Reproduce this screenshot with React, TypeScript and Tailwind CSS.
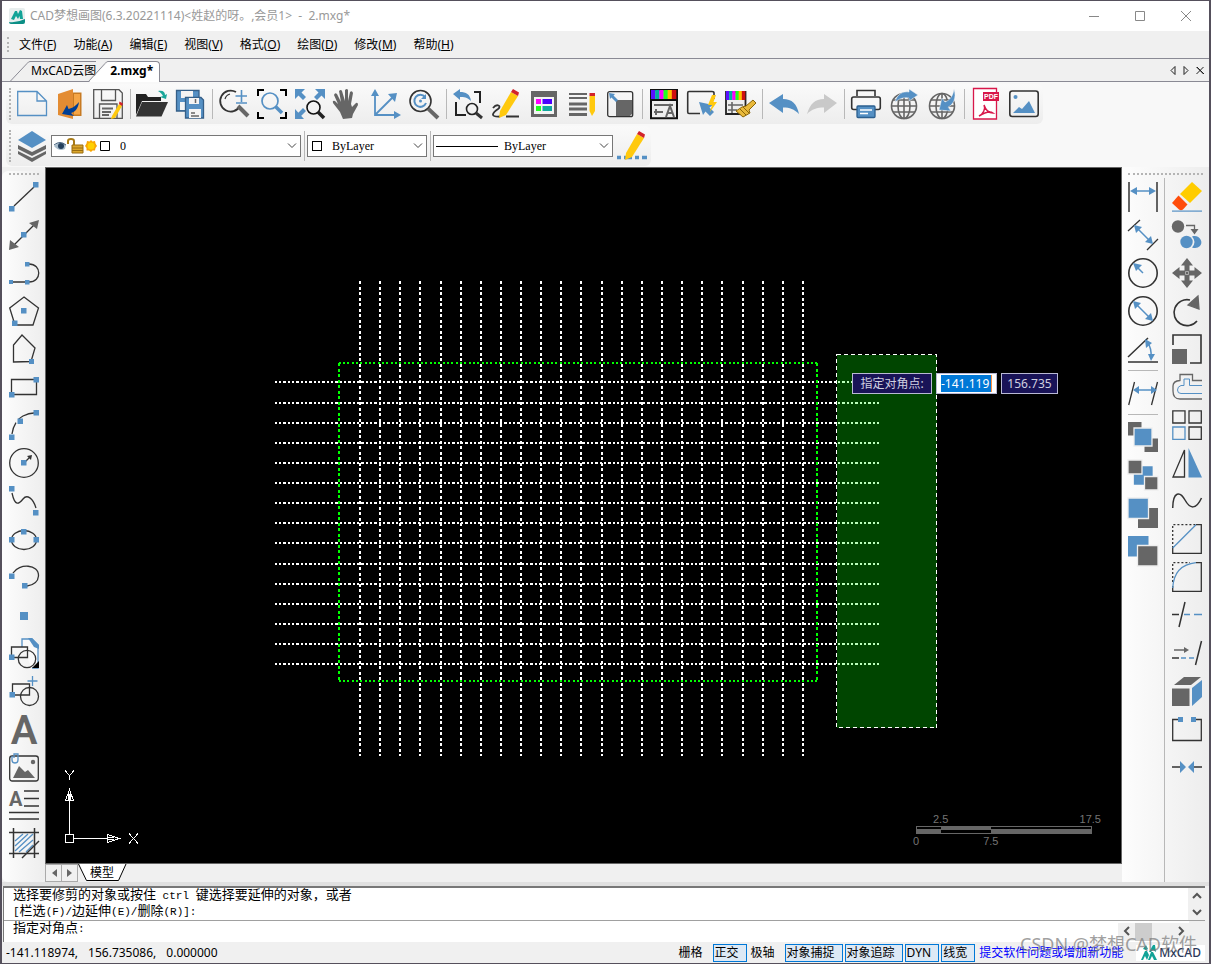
import React from 'react';

const BLUE = '#5590c4';
const GRAY = '#666666';
const DARK = '#333333';

interface IconProps {
  children: React.ReactNode;
}

const Icon: React.FC<IconProps> = ({ children }) => (
  <svg width="30" height="30" viewBox="0 0 30 30" fill="none" stroke={DARK} strokeWidth="1.3" className="shrink-0 overflow-visible" aria-hidden="true">
    {children}
  </svg>
);

// Blue grip handle used on most of the drawing icons
const Sq: React.FC<{ x: number; y: number; s?: number }> = ({ x, y, s = 5.5 }) => (
  <rect x={x} y={y} width={s} height={s} fill={BLUE} stroke="none" />
);

const Lens: React.FC<{ x: number; y: number; r: number; color?: string; handle?: string; w?: number }> = ({ x, y, r, color = DARK, handle = GRAY, w = 4 }) => (
  <>
    <circle cx={x} cy={y} r={r} stroke={color} strokeWidth="1.6" />
    <path d={`M${x + r * 0.75} ${y + r * 0.75}L29 29`} stroke={handle} strokeWidth={w} />
  </>
);

const Pencil: React.FC = () => (
  <g stroke="none">
    <path d="M20 3L27 7L15 26L8 29L9 22Z" fill="#ffc90e" />
    <path d="M22 0L28 3.500L27 7L20 3Z" fill="#d2232a" />
  </g>
);

const Globe: React.FC = () => (
  <g stroke={GRAY} strokeWidth="1.6">
    <circle cx="15" cy="17" r="12.500" />
    <ellipse cx="15" cy="17" rx="6" ry="12.500" />
    <path d="M15 4V30M2.500 17H27.500M4 11H26M4 23H26" />
  </g>
);

const Swatch: React.FC<{ w: number; y: number }> = ({ w, y }) => (
  <g stroke="none">
    {['#5a10ff', '#00b0a0', '#ff00ff', '#20ff20', '#ffc000', '#d01010'].map((c, i) => (
      <rect key={c} x={3 + (i * w) / 6} y={y} width={w / 6 + 0.3} height="9" fill={c} />
    ))}
  </g>
);

interface Tool {
  label: string;
  icon: React.ReactNode;
}

const fileTools: (Tool | null)[] = [
  { label: '新建', icon: <path d="M.7 2.500H20L29.500 12V26.500H.7ZM20 2.500V12H29.500" stroke={BLUE} /> },
  {
    label: '退出',
    icon: (
      <g stroke="none">
        <path d="M14 3.500H26.500V27H14Z" fill="#c77a22" />
        <path d="M19 5H25V25.500H19Z" fill="#f5a545" />
        <path d="M3 5L18 0V30L3 26Z" fill="#e38c33" />
        <path d="M24 13C23 20 20 23 16 24L19 27L7 25L12 16L13.500 20C18 19 20 17 24 13Z" fill="#003f95" />
      </g>
    ),
  },
  {
    label: '保存',
    icon: (
      <>
        <path d="M.7.7H26L29.300 4V29.300H.7Z" stroke="#555" />
        <path d="M8.500.7V11.500H22.500V.7M6.500 29V15H24V29" stroke="#555" />
        <path d="M9 19.500H20M9 23H18M9 26H16" stroke={GRAY} strokeWidth="1.8" />
        <path d="M26 15L29 17L22 29L18 30L19 27Z" fill="#ffc90e" stroke="none" />
        <path d="M26.500 12.500L30 14.500L29 17L26 15Z" fill="#d2232a" stroke="none" />
      </>
    ),
  },
  null,
  {
    label: '打开',
    icon: (
      <g stroke="none" transform="translate(-2 0)">
        <path d="M1 5H11L13 8H26V12H7L1 26Z" fill="#222" />
        <path d="M7 13H33L26.500 27.500H1Z" fill={DARK} />
        <path d="M23 2C28 1 30 3 30 6L32 5L31 10L25 8L28 7C27 5 26 4 23 2Z" fill="#1aa79a" />
      </g>
    ),
  },
  {
    label: '全部保存',
    icon: (
      <>
        <path d="M1.500 1.500H24V22H1.500Z" fill={BLUE} stroke="#355f88" />
        <path d="M6 2H18V9H6ZM5 13H15V21H5Z" fill="#f4f4f4" stroke="none" />
        <path d="M10.500 8.500H26L28.500 11V29H10.500Z" fill={BLUE} stroke="#355f88" />
        <path d="M14 9H24V15H14ZM14 20H26V29H14Z" fill="#f4f4f4" stroke="none" />
        <path d="M16 24H20M16 27H24M20.500 10V14" stroke={GRAY} strokeWidth="1.5" />
      </>
    ),
  },
  null,
  {
    label: '实时缩放',
    icon: (
      <>
        <path d="M17 3A10.500 10.500 0 1 0 21 17" strokeWidth="1.8" />
        <path d="M6 10A7 7 0 0 1 11 5" strokeWidth="1.2" />
        <path d="M19 17L29 27" stroke={GRAY} strokeWidth="4" />
        <path d="M22.500 1V13M16.500 7H28M17 14H28" stroke={BLUE} strokeWidth="1.6" />
      </>
    ),
  },
  {
    label: '窗口缩放',
    icon: (
      <>
        <path d="M1 7V1H7M23 1H29V7M29 23V29H23M7 29H1V23" stroke="#000" strokeWidth="2" />
        <circle cx="13" cy="12" r="8" stroke={BLUE} strokeWidth="1.700" />
        <path d="M18.500 17.500L25 24" stroke={BLUE} strokeWidth="3.500" />
      </>
    ),
  },
  {
    label: '范围缩放',
    icon: (
      <>
        <g fill={BLUE} stroke="none">
          <path d="M0 0H10L0 10ZM30 0V10L20 0ZM0 30V20L9 30Z" />
          <path d="M2 5L5 2L11 8L8 11ZM25 2L28 5L22 11L19 8ZM2 25L5 28L11 22L8 19Z" />
        </g>
        <circle cx="18.500" cy="18.500" r="6.500" stroke="#111" strokeWidth="1.600" />
        <path d="M23 23L29 29" stroke="#222" strokeWidth="3.500" />
      </>
    ),
  },
  {
    label: '平移',
    icon: (
      <path
        d="M11 30L8 23L1 14Q0 11 3 12L6 15L2 6Q3 3 5 5L9 13L7 2Q9 0 10 2L13 12L13 1Q15 -1 16 1V12L18 3Q20 1 21 4L19 15L20 18L24 14Q26 13 26 16L21 25L20 29Z"
        fill={GRAY}
        stroke="none"
        transform="translate(-1 0)"
      />
    ),
  },
  {
    label: '坐标系',
    icon: (
      <g stroke={BLUE} strokeWidth="1.800">
        <path d="M4 5V26H26M4 26L23 7" />
        <path d="M0 7L4 0L8 7ZM23 22L30 26L23 30ZM17 5L26 4L24 13Z" fill={BLUE} stroke="none" />
      </g>
    ),
  },
  {
    label: '缩放上一个',
    icon: (
      <>
        <Lens x={11.5} y={12} r={10.5} />
        <path d="M16 8A6 6 0 1 0 17 14" stroke={BLUE} strokeWidth="2" />
        <path d="M17 5V10H12Z" fill={BLUE} stroke="none" />
        <circle cx="11.500" cy="12" r="1.500" fill={BLUE} stroke="none" />
      </>
    ),
  },
  null,
  {
    label: '返回视图',
    icon: (
      <>
        <path d="M3 13V26H13M21 3H27V14" stroke="#222" strokeWidth="2" />
        <path d="M0 5L7 0V3C13 3 17 5 18 12C14 8 11 8 7 8V11Z" fill={BLUE} stroke="none" />
        <circle cx="19" cy="20" r="5.500" stroke="#222" strokeWidth="1.600" />
        <path d="M23 24L29 29" stroke="#333" strokeWidth="3" />
      </>
    ),
  },
  {
    label: '草图',
    icon: (
      <>
        <path d="M2 19C6 14 11 17 7 20C0 25 0 28 9 27.500M15 27.500H28" strokeWidth="1.800" />
        <Pencil />
      </>
    ),
  },
  {
    label: '特性',
    icon: (
      <g stroke="none">
        <path d="M2 2H28V28H2Z" fill={GRAY} />
        <path d="M5 8H25V25H5Z" fill="#f4f4f4" />
        <path d="M7 10H12V15H7Z" fill="#ff00ff" />
        <path d="M13.500 10H23V15H13.500Z" fill="#4a00ff" />
        <path d="M7 17H12V22H7Z" fill="#20ff20" />
        <path d="M13.500 17H23V22H13.500Z" fill="#10a8a0" />
      </g>
    ),
  },
  {
    label: '线型',
    icon: (
      <>
        <path d="M2 5H20M2 9H20" stroke={GRAY} strokeWidth="1.800" />
        <path d="M2 15H20M2 20H20M2 25.500H20" stroke={GRAY} strokeWidth="3" />
        <path d="M22.500 7H28V22L25 27L22.500 22Z" fill="#ffc90e" stroke="none" />
        <path d="M22.500 4H28V7H22.500Z" fill="#d2232a" stroke="none" />
      </>
    ),
  },
  {
    label: '比例',
    icon: (
      <>
        <rect x="2.700" y="2.700" width="25" height="25" rx="2" />
        <path d="M11 11H27V25L25 27H11Z" fill={GRAY} stroke="none" />
        <path d="M4 4L10 5L8.500 6.500L13 11L11 13L6.500 8.500L5 10Z" fill={BLUE} stroke="none" />
      </>
    ),
  },
  null,
  {
    label: '图层特性',
    icon: (
      <g transform="translate(-1 0)">
        <path d="M3 1H29V29.300H3Z" fill="#eee" stroke="#111" strokeWidth="2" />
        <Swatch w={25} y={1} />
        <path d="M2 11H29" stroke="#111" strokeWidth="2" />
        <path d="M6 16H25M6 23H15" stroke={GRAY} strokeWidth="2" />
        <path d="M8 20V26M18 28L22 17L26 28M19 24H25" stroke={GRAY} strokeWidth="2" />
      </g>
    ),
  },
  {
    label: '快速选择',
    icon: (
      <>
        <path d="M13 24.500H2Q.7 24.500.7 23V4Q.7 2.500 2 2.500H25Q27 2.500 27 4V10" strokeWidth="1.600" />
        <path d="M12 13L26 16L22.500 18.500L27 23L23 27L18.500 22.500L16 26Z" fill={BLUE} stroke="none" />
        <path d="M25 6L21 16H25L23 23L30 13H26.500L29 6Z" fill="#ffc90e" stroke="none" />
      </>
    ),
  },
  {
    label: '特性匹配',
    icon: (
      <g transform="translate(-2 0)">
        <path d="M3 3H22.500V25H3Z" fill="#eee" stroke="#222" strokeWidth="1.800" />
        <Swatch w={19} y={2} />
        <path d="M5 16H20M5 21H14M9 13V24" stroke={GRAY} strokeWidth="1.600" />
        <path d="M30 11L33 14L26 21L27 24L20 28L13 22L19 18L23 17Z" fill="#e9b93a" stroke="#8a6508" strokeWidth="1" />
        <path d="M17 20L23 26M20 18L26 24" stroke="#8a6508" strokeWidth="1" />
      </g>
    ),
  },
  null,
  { label: '撤销', icon: <path d="M0 14L14 5V10C23 10 28 15 30 25C25 20 21 18.500 14 18.500V24Z" fill={BLUE} stroke="none" /> },
  { label: '重做', icon: <path d="M30 14L17 5V10C8 10 3 15 0 25C5 20 10 18.500 17 18.500V24Z" fill="#c9c9c9" stroke="none" /> },
  null,
  {
    label: '打印',
    icon: (
      <>
        <path d="M6 7V1.500H24V7" strokeWidth="1.600" />
        <rect x=".7" y="8" width="28.600" height="12.500" rx="2" fill="#f7f7f7" strokeWidth="1.600" />
        <rect x="6" y="17" width="18" height="11.500" rx="1" fill={BLUE} stroke="#2b5f8f" />
        <path d="M9 21H21M9 24.500H17" stroke="#fff" strokeWidth="1.500" />
      </>
    ),
  },
  {
    label: '网络发布',
    icon: (
      <>
        <Globe />
        <path d="M6 13C8 5 14 2 20 3V0L29 6L20 12V9C14 8 10 10 6 13Z" fill={BLUE} stroke="#f7f7f7" strokeWidth=".5" />
      </>
    ),
  },
  {
    label: '网络下载',
    icon: (
      <>
        <Globe />
        <path d="M27 0C30 9 26 16 21 18L24 22L12 21L15 9L18 13C23 11 26 7 27 0Z" fill={BLUE} stroke="#f7f7f7" strokeWidth=".5" />
      </>
    ),
  },
  null,
  {
    label: '输出PDF',
    icon: (
      <>
        <path d="M2.500 -.5H25.500V30H2.500Z" fill="#fff" stroke="#d8174a" />
        <path d="M12 3H28V12H12Z" fill="#d8174a" stroke="none" />
        <text x="13" y="10" fill="#fff" stroke="none" className="font-['Liberation_Sans'] text-[7px] font-bold">PDF</text>
        <path d="M13 16C15 22 18 24 22 24C19 22 13 24 8 27C12 25 15 20 13 16Z" stroke="#d8174a" strokeWidth="1.500" />
      </>
    ),
  },
  {
    label: '输出图片',
    icon: (
      <>
        <rect x=".8" y="2" width="28.400" height="25.500" rx="2.500" strokeWidth="1.600" />
        <circle cx="6.500" cy="8" r="2" fill={BLUE} stroke="none" />
        <path d="M4 24L10 18L13 20L20 12L26 24Z" fill={BLUE} stroke="none" />
      </>
    ),
  },
];

const drawTools: Tool[] = [
  { label: '直线', icon: <><path d="M5 24L25 5" /><Sq x={24} y={0} /><Sq x={0} y={24} /></> },
  { label: '构造线', icon: <><path d="M4 26L26 4" /><path d="M30 0L20 3L28 9ZM0 30L10 27L1 20Z" fill={GRAY} stroke="none" /><Sq x={12} y={12} /></> },
  { label: '多段线', icon: <><path d="M4 24H18M20 6C33 6 33 24 20 24" /><Sq x={16} y={4} s={4.5} /><Sq x={0} y={22} s={4} /><Sq x={16} y={22} s={4.5} /></> },
  { label: '多边形', icon: <><path d="M15 1L29.500 12L24 29H6L.7 12Z" /><Sq x={12} y={12} /><Sq x={3} y={24.5} /></> },
  { label: '任意多边形', icon: <><path d="M13 1L26 14L22 27.500L4.500 28V11Z" /><Sq x={20} y={25} s={5} /></> },
  { label: '矩形', icon: <><path d="M2.500 7.500H27.500V22.500H2.500Z" /><Sq x={24.5} y={5} /><Sq x={0} y={20} /></> },
  { label: '圆弧', icon: <><path d="M3 24Q5 11 14 6Q20 3 25 3" strokeDasharray="12 4 20" /><Sq x={24.5} y={0} /><Sq x={8.5} y={8.5} /><Sq x={0} y={24.5} /></> },
  { label: '圆', icon: <><circle cx="15" cy="15" r="14.300" /><path d="M15 15L21 9" /><path d="M23 7L18 8L22 12Z" fill={DARK} stroke="none" /><Sq x={12} y={12} /></> },
  { label: '样条曲线', icon: <><path d="M3 7C6 21 10 18 14 13S24 12 27 22" /><Sq x={0} y={0} /><Sq x={24} y={24} /></> },
  { label: '椭圆', icon: <><ellipse cx="15" cy="16" rx="12.500" ry="9.500" /><Sq x={12} y={5} /><Sq x={0} y={13} /><Sq x={24.5} y={13} /></> },
  { label: '椭圆弧', icon: <><path d="M4 11C10 1 30 2 29.500 14C29 20 25 23 18 24" /><Sq x={0} y={11.5} /><Sq x={13} y={21} /></> },
  { label: '点', icon: <Sq x={11} y={12} s={8} /> },
  {
    label: '插入块',
    icon: (
      <>
        <path d="M13 9V1H23L29 7V30H23" fill="#fafafa" stroke={BLUE} />
        <path d="M19 0H23L30 7V11L25 9Z" fill={BLUE} stroke="none" />
        <path d="M2.500 9H18.500V19.500H2.500Z" />
        <circle cx="18" cy="21" r="8.700" />
        <path d="M30 23V30H23Z" fill="#000" stroke="none" />
        <Sq x={0} y={16.5} />
      </>
    ),
  },
  {
    label: '创建块',
    icon: (
      <>
        <path d="M3.500 8H20.500V19H3.500Z" />
        <circle cx="20.500" cy="20.500" r="9" />
        <path d="M23.500 0V10M18.500 5H28.500" stroke={BLUE} />
        <Sq x={0.5} y={16} />
      </>
    ),
  },
  { label: '单行文字', icon: <text x="15" y="29.500" textAnchor="middle" fill={GRAY} stroke="none" className="font-[Roboto] text-[40px] font-semibold">A</text> },
  {
    label: '图像',
    icon: (
      <>
        <rect x=".7" y="4" width="28.600" height="25" rx="2.500" />
        <path d="M4 26L10 14L16 20L19 18L26 26Z" fill={GRAY} stroke="none" />
        <circle cx="24" cy="10" r="2.200" fill={GRAY} stroke="none" />
        <path d="M3 4V8Q3 11 6 11T9 8V2H5V6" stroke={BLUE} />
      </>
    ),
  },
  {
    label: '多行文字',
    icon: (
      <>
        <text x="0" y="16" fill={GRAY} stroke="none" className="font-[Roboto] text-[20px] font-bold">A</text>
        <path d="M15 1H30M15 8.500H30M15 16H30M0 22.500H30M0 29H30" strokeWidth="1.500" />
      </>
    ),
  },
  {
    label: '图案填充',
    icon: (
      <>
        <path d="M6 13L14 6M6 18L19 6M6 23L24 6M10 24L24 12M17 24L24 17" stroke={BLUE} />
        <path d="M0 4.500H30M0 25.500H30M4.500 0V30M25.500 0V30" strokeWidth="1.500" />
        <path d="M30 13L13 30" strokeWidth="1.500" />
      </>
    ),
  },
];

const dimTools: (Tool | null)[] = [
  { label: '线性标注', icon: <><path d="M1 0V30M29 0V30" strokeWidth="1.500" /><path d="M6 9H24" stroke={BLUE} strokeWidth="1.500" /><path d="M2 9L9 5V13ZM28 9L21 5V13Z" fill={BLUE} stroke="none" /></> },
  { label: '对齐标注', icon: <><path d="M0 11L12 0M19 30L30 19" /><path d="M8 7L23 22" stroke={BLUE} strokeWidth="1.500" /><path d="M6 5L14 7L8 13ZM25 24L17 22L23 16Z" fill={BLUE} stroke="none" /></> },
  { label: '半径标注', icon: <><circle cx="15" cy="15" r="14.200" strokeWidth="1.600" /><path d="M8 8L15 15" stroke={BLUE} strokeWidth="1.500" /><path d="M5 5L14 7L8 13Z" fill={BLUE} stroke="none" /></> },
  { label: '直径标注', icon: <><circle cx="15" cy="15" r="14.200" strokeWidth="1.600" /><path d="M8 8L22 22" stroke={BLUE} strokeWidth="1.500" /><path d="M5 5L13 7L7 13ZM25 25L17 23L23 17Z" fill={BLUE} stroke="none" /></> },
  { label: '角度标注', icon: <><path d="M0 23L20 4M0 28H30" strokeWidth="1.500" /><path d="M19 8Q24 14 23 24" stroke={BLUE} strokeWidth="1.500" /><path d="M17 5L24 9L18 14ZM23 27L20 20L27 20Z" fill={BLUE} stroke="none" /></> },
  null,
  { label: '标注间距', icon: <><path d="M6.500 4L.7 27M29.500 4L23.500 27" /><path d="M9 12H25" stroke={BLUE} strokeWidth="1.500" /><path d="M5 12L11 8V16ZM29 12L23 8V16Z" fill={BLUE} stroke="none" /></> },
  null,
  { label: '置于上方', icon: <g stroke="none"><path d="M0 0H13.500V13.500H0ZM16.500 16.500H30V30H16.500Z" fill={GRAY} /><path d="M6 6H24V24H6Z" fill={BLUE} stroke="#eee" /></g> },
  { label: '置于下方', icon: <g stroke="#eee"><path d="M13 7H24V17H13ZM6.500 13H17V24H6.500Z" fill={BLUE} stroke={BLUE} /><path d="M0 0H14V14H0ZM16.500 16.500H30V30H16.500Z" fill={GRAY} /></g> },
  { label: '前置', icon: <g stroke="none"><path d="M10 10H30V30H10Z" fill={GRAY} /><path d="M0 0H20.500V20.500H0Z" fill={BLUE} stroke="#eee" /></g> },
  { label: '后置', icon: <g stroke="none"><path d="M0 0H20.500V20.500H0Z" fill={BLUE} /><path d="M9.500 9.500H30V30H9.500Z" fill={GRAY} stroke="#eee" /></g> },
];

const modifyTools: Tool[] = [
  { label: '删除', icon: <g stroke="none"><path d="M20 0L30 9L18 21L8 12Z" fill="#ffcc00" /><path d="M6.500 13.500L15.500 22.500L11 27.500Q9 29 7 27.500L0 21Z" fill="#ff4d0a" /><path d="M0 28.500H30V29.700H0Z" fill={BLUE} /></g> },
  { label: '复制', icon: <><circle cx="6" cy="6.500" r="6.200" fill={GRAY} stroke="none" /><path d="M14 5.500H22.500V10" stroke={GRAY} /><path d="M18.500 9H26.500L22.500 14.500Z" fill={GRAY} stroke="none" /><circle cx="14.500" cy="22" r="6.200" fill={BLUE} stroke="none" /><path d="M20 16.500C27 14 32 22 28 26Q25 29 20 27.500Q25 22 20 16.500Z" fill={BLUE} stroke="none" /></> },
  {
    label: '移动',
    icon: (
      <>
        <path d="M15 0L21 7.500H17.500V12.500H22.500V9L30 15L22.500 21V17.500H17.500V22.500H21L15 30L9 22.500H12.500V17.500H7.500V21L0 15L7.500 9V12.500H12.500V7.500H9Z" fill={GRAY} stroke="none" />
        <path d="M13.500 13.500H16.500V16.500H13.500Z" fill={GRAY} stroke="#bbb" strokeWidth=".8" />
      </>
    ),
  },
  { label: '旋转', icon: <><path d="M18 4A13 13 0 1 0 25 25" strokeWidth="1.600" /><path d="M26 0L16 9L27 13Z" fill={GRAY} stroke={GRAY} /></> },
  { label: '缩放', icon: <><path d="M1 11V1H29V29H18" strokeWidth="1.600" /><path d="M0 15H15V30H0Z" fill={GRAY} stroke="none" /></> },
  { label: '偏移', icon: <><path d="M30 8.500H20.500V2.500H8V8.500Q1 9 1 14V19Q1 27 8 27H30" stroke={GRAY} /><path d="M30 21.500H9Q5.500 21.500 5.500 18T9 13.500H12V7H17.500V13.500H30" stroke={BLUE} strokeWidth="1" /></> },
  { label: '阵列', icon: <><path d="M.8.8H13V13H.8ZM17 .8H29.300V13H17ZM17 17H29.300V29.300H17Z" /><path d="M.8 17H13V29.300H.8Z" stroke={BLUE} /></> },
  { label: '镜像', icon: <><path d="M12.500 2V29H1Z" /><path d="M16.500 0L30 29.500H16.500Z" fill={BLUE} stroke="none" /></> },
  { label: '曲线', icon: <path d="M.7 22C1 5 8 5 13 14S24 24 29.500 12" strokeWidth="1.500" /> },
  { label: '倒角', icon: <><path d="M.7 24V.7H24" strokeDasharray="2 2" /><path d="M24 .7H29.300V29.300H.7V24" /><path d="M.7 24L24 .7" stroke={BLUE} /></> },
  { label: '圆角', icon: <><path d="M.7 20V.7H18" strokeDasharray="2 2" /><path d="M24 .7H29.300V29.300H.7V24" /><path d="M.7 26Q2 3 24 .7" stroke={BLUE} /></> },
  { label: '修剪', icon: <><path d="M13 2L7 27M0 14.500H7" strokeWidth="1.500" /><path d="M12 14.500H18M22 14.500H30" stroke={BLUE} strokeWidth="1.500" /></> },
  { label: '延伸', icon: <><path d="M29.500 3L23.500 27M0 20H7" strokeWidth="1.500" /><path d="M9 20H14M17 20H22" stroke={BLUE} strokeWidth="1.500" /><path d="M2 12H14" stroke={GRAY} strokeWidth="1.500" /><path d="M12 9L17 12L12 15Z" fill={GRAY} stroke="none" /></> },
  { label: '三维', icon: <g stroke="none"><path d="M2 9L12 1H29L19 9Z" fill={GRAY} /><path d="M0 12.500H17.500V30H0Z" fill={GRAY} /><path d="M20 12L30 4V21L20 30Z" fill={BLUE} /></g> },
  { label: '打断', icon: <><path d="M7 5.500H.7V26.500H29.300V5.500H23" /><Sq x={6} y={3} s={5} /><Sq x={19} y={3} s={5} /></> },
  { label: '合并', icon: <><path d="M0 15H9M21 15H30" strokeWidth="1.600" /><path d="M8 9L14 15L8 21ZM22 9L16 15L22 21Z" fill={BLUE} stroke="none" /></> },
];

const menus = [
  ['文件', 'F'], ['功能', 'A'], ['编辑', 'E'], ['视图', 'V'],
  ['格式', 'O'], ['绘图', 'D'], ['修改', 'M'], ['帮助', 'H'],
];

const ToolButton: React.FC<{ tool: Tool }> = ({ tool }) => (
  <button type="button" aria-label={tool.label} className="flex size-[38px] shrink-0 items-center justify-center hover:bg-blue-100">
    <Icon>{tool.icon}</Icon>
  </button>
);

const Grip: React.FC = () => <span className="mr-0.5 h-8 border-l-2 border-dotted border-[#b4b4b4]" />;

const VSep: React.FC = () => (
  <span className="flex w-1.5 shrink-0 justify-center"><span className="h-[30px] w-px bg-[#b8b8b8]" /></span>
);

const Chevron: React.FC = () => (
  <svg width="10" height="6" viewBox="0 0 10 6" fill="none" stroke="#444" className="pointer-events-none mr-[3px] shrink-0"><path d="M1 .5L5 4.500L9 .5" /></svg>
);

const Logo: React.FC<{ plain?: boolean }> = ({ plain }) => (
  <svg width="17" height="17" viewBox="0 0 17 17" className="shrink-0">
    {!plain && <rect width="16" height="16" rx="2" fill="#e8eeee" />}
    {!plain && <path d="M0 14Q8 15 16 11V14Q16 16 14 16H2Q0 16 0 14Z" fill="#0c8f86" />}
    {plain ? (
      <g fill="#11a397">
        <path d="M1 16L5 7L7 7L9 11L7 16L5 12L3 16ZM8 16L11 8L13 8L17 16H14L12 12L10 16Z" />
        <path d="M3 5L6 1L8 5L6 6ZM9 8L13 1L15 1L16 8L13 6L11 8Z" />
      </g>
    ) : (
      <path d="M2 11L6 3L8 3L9 6L11 2L13 3L14 11L11 11L10.500 8L9 11L7 8L5 12Z" fill="#11a397" />
    )}
  </svg>
);

const TitleBar: React.FC = () => (
  <header className="flex h-[30px] shrink-0 items-center bg-white pl-[7px]">
    <Logo />
    <h1 className="ml-1 flex-1 text-[12px] whitespace-pre text-[#999]">CAD梦想画图(6.3.20221114)&lt;姓赵的呀。,会员1&gt;  -  2.mxg*</h1>
    {[
      { label: '最小化', d: 'M1 6.500H11' },
      { label: '最大化', d: 'M1.500 1.500H10.500V10.500H1.500Z' },
      { label: '关闭', d: 'M1 1L11 11M11 1L1 11' },
    ].map((b) => (
      <button key={b.label} type="button" aria-label={b.label} className="flex h-full w-[46px] items-center justify-center">
        <svg width="12" height="12" viewBox="0 0 12 12" fill="none" stroke="#888"><path d={b.d} /></svg>
      </button>
    ))}
  </header>
);

const MenuBar: React.FC = () => (
  <nav className="flex h-7 shrink-0 items-center gap-px border-b border-[#8a8a94] bg-[#f0f0f0] pl-[5px]">
    <span className="mr-px h-[15px] border-l-2 border-dotted border-[#b4b4b4]" />
    {menus.map(([name, key]) => (
      <button key={key} type="button" className="px-2 text-[12px] whitespace-nowrap">
        {name}(<u>{key}</u>)
      </button>
    ))}
  </nav>
);

const DocumentTabs: React.FC = () => (
  <div className="flex h-[23px] shrink-0 items-end border-b border-[#8a8a94] bg-[#f0f0f0] pl-2">
    <button type="button" className="flex h-5 items-stretch text-[12px]">
      <svg width="20" height="20" fill="none" stroke="#8a8a94"><path d="M.5 20L17 2.500Q18.500 .5 20 .5" /></svg>
      <span className="border-t border-[#8a8a94] pl-px">MxCAD云图</span>
    </button>
    <button type="button" className="-mb-px -ml-2 flex h-[21px] items-stretch text-[12px] font-bold">
      <svg width="20" height="21" fill="#fff" stroke="#8a8a94"><path d="M.5 20.500L17 2.500Q18.500 .5 20 .5" /><path d="M1 21L20 1V21Z" stroke="none" /></svg>
      <span className="rounded-tr-sm border-t border-r border-[#8a8a94] bg-white pr-1.5 pl-0.5">2.mxg*</span>
    </button>
    <div className="ml-auto flex items-center gap-1 self-center pr-1">
      {[
        { label: '上一个文档', d: 'M8 1.500V9.500L4 5.500Z' },
        { label: '下一个文档', d: 'M3 1.500V9.500L7 5.500Z' },
        { label: '关闭文档', d: 'M1.500 2L8.500 9M8.500 2L1.500 9M2 2L9 9' },
      ].map((b) => (
        <button key={b.label} type="button" aria-label={b.label}>
          <svg width="10" height="11" fill="none" stroke="#222"><path d={b.d} /></svg>
        </button>
      ))}
    </div>
  </div>
);

const LayerBar: React.FC = () => (
  <div className="flex h-10 w-fit items-center rounded-md bg-linear-to-b from-[#fafafa] to-[#ededed] pl-[3px]">
    <Grip />
    <button type="button" aria-label="图层" className="flex size-[38px] items-center justify-center">
      <Icon>
        <g stroke="none">
          <path d="M1 20L15 27L29 20V23L15 31L1 23ZM1 14L15 21L29 14V18L15 25L1 18Z" fill={GRAY} />
          <path d="M15 0L29 9L15 17L1 9Z" fill={BLUE} />
        </g>
      </Icon>
    </button>
    <div className="flex h-[22px] w-[250px] items-center border border-[#777] bg-white pl-0.5">
      <svg width="56" height="18" viewBox="0 0 56 18" className="shrink-0">
        <path d="M0 9Q6 3 12 8L11 12Q5 15 0 9Z" fill="#a8bccb" />
        <circle cx="7" cy="9" r="3" fill="#24405e" />
        <path d="M0 8Q6 3 12 8" fill="none" stroke="#44607c" />
        <path d="M14 7V4Q14 2 17 2T20 4V8" fill="none" stroke="#a87b18" strokeWidth="2" />
        <path d="M18 8H29V16H18Z" fill="#dba72c" stroke="#9a6d10" />
        <path d="M18 11H29M18 13.500H29" stroke="#9a6d10" />
        <path d="M37 3L38.500 4.500L41 4L41.500 6.500L43 9L41.500 11L41 13.500L38.500 13.500L37 15L35 13.500L32.500 13.500L32.500 11L31 9L32.500 6.500L33 4L35.500 4.500Z" fill="#f9a602" />
        <circle cx="37" cy="9" r="3.500" fill="#ffd000" />
        <path d="M46.500 4.500H55.500V13.500H46.500Z" fill="#fff" stroke="#000" strokeWidth="1" />
      </svg>
      <select aria-label="当前图层" className="h-full min-w-0 flex-1 appearance-none bg-transparent pl-[10px] font-['Liberation_Serif','Noto_Sans_CJK_SC',serif] text-[12px] outline-none">
        <option>0</option>
      </select>
      <Chevron />
    </div>
    <VSep />
    <div className="flex h-[22px] w-[120px] items-center border border-[#777] bg-white pl-1">
      <span className="size-2.5 border border-black" />
      <select aria-label="颜色" className="h-full min-w-0 flex-1 appearance-none bg-transparent pl-[10px] font-['Liberation_Serif','Noto_Sans_CJK_SC',serif] text-[12px] outline-none">
        <option>ByLayer</option>
      </select>
      <Chevron />
    </div>
    <VSep />
    <div className="flex h-[22px] w-[180px] items-center border border-[#777] bg-white pl-0.5">
      <span className="h-px w-[62px] bg-black" />
      <select aria-label="线型" className="h-full min-w-0 flex-1 appearance-none bg-transparent pl-1.5 font-['Liberation_Serif','Noto_Sans_CJK_SC',serif] text-[12px] outline-none">
        <option>ByLayer</option>
      </select>
      <Chevron />
    </div>
    <ToolButton tool={{ label: '线型管理', icon: <><path d="M0 26.500H30" stroke={BLUE} strokeWidth="3.500" strokeDasharray="4 3 8 3" /><Pencil /></> }} />
  </div>
);

const columns = [360, 380, 400, 420, 441, 461, 481, 501, 521, 541, 561, 581, 602, 622, 642, 662, 682, 702, 722, 743, 763, 783, 803];
const rows = [382, 403, 423, 443, 463, 483, 503, 523, 543, 564, 584, 604, 624, 644, 664];

const Drawing: React.FC = () => (
  <div className="relative min-h-0 flex-1 overflow-hidden border border-[#666] bg-black">
    <svg className="absolute inset-0 size-full" fill="none" shapeRendering="crispEdges">
      <g transform="translate(-46 -168)">
        <g stroke="#fff" strokeWidth="2">
          {columns.map((x) => <path key={x} d={`M${x} 281V756`} strokeDasharray="3 3 3 2" />)}
          {rows.map((y) => <path key={y} d={`M275 ${y}H880`} strokeDasharray="2 2 2 2 3 2" />)}
        </g>
        <path d="M339 363H817M339 681H817" stroke="#00ff00" strokeWidth="2" strokeDasharray="2 2 2 2 2 3" />
        <path d="M339 363V682M817 363V682" stroke="#00ff00" strokeWidth="2" strokeDasharray="3 3 3 2" />
        <rect x="836.5" y="354.5" width="100" height="373" fill="#00ff00" fillOpacity=".27" stroke="#fff" strokeDasharray="4 3" />
      </g>
    </svg>

    {/* dynamic input shown beside the cursor */}
    <form className="absolute top-[205px] left-[806px] flex items-center gap-1 text-[12px] text-[#d0d0e0]">
      <label htmlFor="dyn-x" className="flex h-[21px] w-20 items-center justify-center border border-[#b9b9d4] bg-[#191357] whitespace-nowrap">指定对角点:</label>
      <span className="flex h-[21px] w-[61px] items-center border border-[#b9b9d4] bg-white px-1">
        <input id="dyn-x" defaultValue="-141.119" className="h-[17px] w-[51px] border-r border-[#ff9040] bg-[#0078d7] text-white outline-none" />
      </span>
      <input aria-label="Y" defaultValue="156.735" className="h-[21px] w-[57px] border border-[#b9b9d4] bg-[#191357] text-center outline-none" />
    </form>

    <svg width="80" height="80" className="absolute bottom-[15px] left-4" fill="none" stroke="#fff" shapeRendering="crispEdges">
      <path d="M3.500 66.500H11.500V74.500H3.500ZM7.500 66V26M12 70.500H46" />
      <path d="M3.500 32.500L7.500 21.500L11.500 32.500ZM6.500 32V26M8.500 32V26M45.500 66.500L57 70.500L45.500 74.500ZM46 69.500H52M46 71.500H52" />
      <path d="M3 2.500L7.500 7.500L12 2.500M7.500 7V12M67 65.500L76 75.500M76 65.500L67 75.500" />
    </svg>

    <div className="absolute right-2 bottom-[15px] w-[206px] font-['Liberation_Sans',sans-serif] text-[11px] leading-[14px] text-[#747474]">
      <div className="flex justify-between pl-[26px]"><span>2.5</span><span className="pr-3">17.5</span></div>
      <div className="mr-[21px] ml-[9px] flex h-2 border border-[#666]">
        <span className="mt-auto h-1 w-6 bg-[#666]" />
        <span className="h-[3px] w-[50px] bg-[#666]" />
        <span className="mt-auto h-1 flex-1 bg-[#666]" />
      </div>
      <div className="flex gap-16 pl-[6px]"><span>0</span><span>7.5</span></div>
    </div>
  </div>
);

const ModelTabs: React.FC = () => (
  <div className="flex h-[18px] shrink-0 bg-[#f0f0f0] text-[12px]">
    <button type="button" aria-label="向左" className="flex w-[17px] items-center justify-center border border-[#aaa]"><svg width="6" height="8"><path d="M6 0V8L1 4Z" fill="#666" /></svg></button>
    <button type="button" aria-label="向右" className="-ml-px flex w-[17px] items-center justify-center border border-[#aaa]"><svg width="6" height="8"><path d="M0 0V8L5 4Z" fill="#666" /></svg></button>
    <button type="button" className="relative h-[17px] px-3 leading-[16px]">
      <svg className="absolute inset-0" width="50" height="17" fill="#fff" stroke="#000"><path d="M.5 0L8.500 16.500H40.500L48 0" /></svg>
      <span className="relative">模型</span>
    </button>
  </div>
);

const Arrow: React.FC<{ d: string; label: string }> = ({ d, label }) => (
  <button type="button" aria-label={label} className="flex h-4 w-[17px] items-center justify-center">
    <svg width="10" height="10" viewBox="0 0 10 10" fill="none" stroke="#555" strokeWidth="2"><path d={d} /></svg>
  </button>
);

const CommandPanel: React.FC = () => (
  <section className="mr-1 ml-px shrink-0 border-t-2 border-l border-[#777] bg-white font-['Liberation_Mono','Noto_Sans_CJK_SC',monospace] text-[13px] leading-[16px]">
    <div className="flex h-[33px] border-b border-[#a0a0a0]">
      <div className="flex-1 overflow-hidden pl-[9px] whitespace-pre">
        <p>选择要修剪的对象或按住<span className="text-[11px]"> ctrl </span>键选择要延伸的对象，或者</p>
        <p><span className="text-[11px]">[</span>栏选<span className="text-[11px]">(F)/</span>边延伸<span className="text-[11px]">(E)/</span>删除<span className="text-[11px]">(R)]:</span></p>
      </div>
      <div className="flex flex-col bg-[#f0f0f0]">
        <Arrow label="向上滚动" d="M1 7L5 3L9 7" />
        <Arrow label="向下滚动" d="M1 3L5 7L9 3" />
      </div>
    </div>
    <div className="flex h-[21px]">
      <label htmlFor="command" className="pl-[9px]">指定对角点<span className="text-[11px]">:</span></label>
      <input id="command" className="min-w-0 flex-1 outline-none" />
      <div className="mt-0.5 flex h-[18px] bg-[#f0f0f0]">
        <Arrow label="向左滚动" d="M7 1L3 5L7 9" />
        <span className="h-full w-[17px] bg-[#cdcdcd]" />
        <span className="w-5" />
        <Arrow label="向右滚动" d="M3 1L7 5L3 9" />
      </div>
      <span className="w-4 bg-[#f0f0f0]" />
    </div>
  </section>
);

const modes = [
  { name: '栅格', on: false }, { name: '正交', on: true }, { name: '极轴', on: false },
  { name: '对象捕捉', on: true }, { name: '对象追踪', on: true }, { name: 'DYN', on: true }, { name: '线宽', on: true },
];

const StatusBar: React.FC = () => (
  <footer className="flex h-[21px] shrink-0 items-center bg-[#f0f0f0] pr-1 pl-1 text-[12px] whitespace-pre">
    <output className="flex flex-1 gap-2.5"><span>-141.118974,</span><span>156.735086,</span><span>0.000000</span></output>
    <div className="flex gap-0.5">
      {modes.map((m) => (
        <button
          key={m.name}
          type="button"
          aria-pressed={m.on}
          className={`flex h-[18px] items-center border pr-[7px] pl-px ${m.on ? 'border-[#0078d7] bg-[#dde9f5]' : 'border-transparent'}`}
        >
          {m.name}
        </button>
      ))}
    </div>
    <a href="#feedback" className="mx-1 text-[#0000ff]">提交软件问题或增加新功能</a>
    <div className="ml-[9px] flex h-4 items-center bg-white px-1">
      <Logo plain />
      <span className="ml-0.5 font-medium text-[#2c3858]">MxCAD</span>
    </div>
  </footer>
);

const App: React.FC = () => {
  return (
    <div className="relative flex h-screen min-h-[700px] flex-col overflow-hidden border-t border-r-2 border-b border-l-2 border-[#55505c] bg-[#f0f0f0] font-['Noto_Sans','Noto_Sans_CJK_SC',sans-serif] text-black">
      <TitleBar />
      <MenuBar />
      <DocumentTabs />
      <div className="flex shrink-0 flex-col gap-0.5 bg-[#f8f8f8] pt-0.5 pb-px pl-1">
        <div className="flex h-10 w-fit items-center rounded-md bg-linear-to-b from-[#fafafa] to-[#ededed] pl-[3px]">
          <Grip />
          {fileTools.map((t, i) => (t ? <ToolButton key={t.label} tool={t} /> : <VSep key={i} />))}
        </div>
        <LayerBar />
      </div>

      <main className="flex min-h-0 flex-1">
        <aside className="mt-1 flex w-[43px] shrink-0 flex-col items-center rounded-md bg-linear-to-r from-[#fdfdfd] to-[#ededed]">
          <span className="mt-0.5 mb-[3px] w-[30px] border-t-2 border-dotted border-[#b4b4b4]" />
          {drawTools.map((t) => <ToolButton key={t.label} tool={t} />)}
        </aside>
        <div className="flex min-w-0 flex-1 flex-col">
          <Drawing />
          <ModelTabs />
        </div>
        <aside className="w-[87px] shrink-0 bg-linear-to-r from-[#fdfdfd] to-[#ededed] pt-1">
          <div className="mx-1.5 mt-0.5 mb-[3px] border-t-2 border-dotted border-[#b4b4b4]" />
          <div className="flex h-[704px]">
            <div className="flex w-[43px] flex-col items-center border-r border-[#b8b8b8]">
              {dimTools.map((t, i) => (t ? <ToolButton key={t.label} tool={t} /> : <hr key={i} className="mt-0.5 mb-[3px] w-[30px] border-[#b8b8b8]" />))}
            </div>
            <div className="flex flex-1 flex-col items-center">
              {modifyTools.map((t) => <ToolButton key={t.label} tool={t} />)}
            </div>
          </div>
        </aside>
      </main>

      <div className="h-1 shrink-0 bg-[#e0e0e0]" />
      <CommandPanel />
      <StatusBar />

      <div className="pointer-events-none absolute right-3 bottom-1.5 font-['Noto_Sans','Noto_Sans_CJK_SC',sans-serif] text-[18px] leading-[26px] text-[#777]/70">CSDN @梦想CAD软件</div>
    </div>
  );
};

export default App;
